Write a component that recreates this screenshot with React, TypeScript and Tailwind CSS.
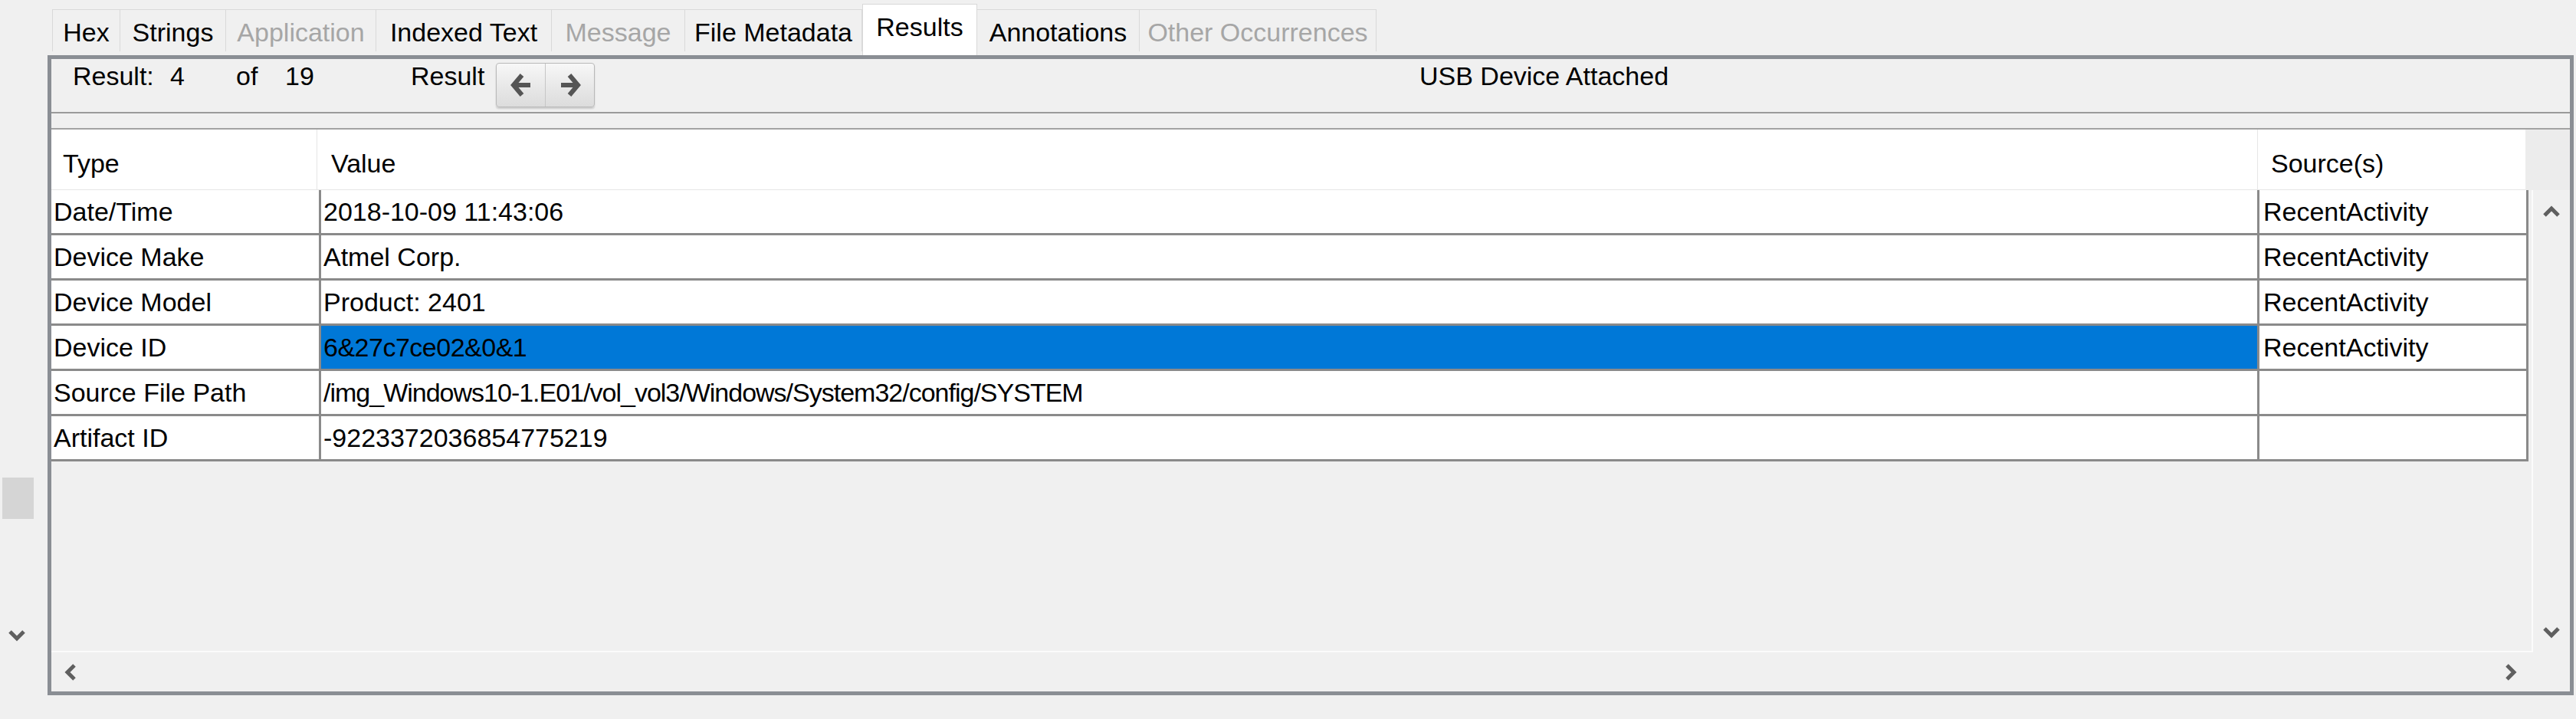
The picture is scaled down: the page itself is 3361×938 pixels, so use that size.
import React from 'react'

const tabs = [
  { label: 'Hex', w: 'w-[89px]', disabled: false },
  { label: 'Strings', w: 'w-[138px]', disabled: false },
  { label: 'Application', w: 'w-[196px]', disabled: true },
  { label: 'Indexed Text', w: 'w-[229px]', disabled: false },
  { label: 'Message', w: 'w-[174px]', disabled: true },
  { label: 'File Metadata', w: 'w-[231px]', disabled: false },
  { label: 'Results', w: 'w-[150px]', disabled: false, selected: true },
  { label: 'Annotations', w: 'w-[212px]', disabled: false },
  { label: 'Other Occurrences', w: 'w-[309px]', disabled: true },
]

// tight: Tahoma is narrower than Liberation Sans for some glyphs
const rows = [
  { type: 'Date/Time', value: '2018-10-09 11:43:06', source: 'RecentActivity', tight: '' },
  { type: 'Device Make', value: 'Atmel Corp.', source: 'RecentActivity', tight: '' },
  { type: 'Device Model', value: 'Product: 2401', source: 'RecentActivity', tight: '' },
  { type: 'Device ID', value: '6&27c7ce02&0&1', source: 'RecentActivity', tight: 'tracking-[-0.5px]' },
  {
    type: 'Source File Path',
    value: '/img_Windows10-1.E01/vol_vol3/Windows/System32/config/SYSTEM',
    source: '',
    tight: 'tracking-[-1px]',
  },
  { type: 'Artifact ID', value: '-9223372036854775219', source: '', tight: '' },
]

function Chevron({ dir }: { dir: 'up' | 'down' | 'left' | 'right' }) {
  if (dir === 'up' || dir === 'down') {
    return (
      <svg width="24" height="16" viewBox="0 0 24 16">
        <polyline
          points={dir === 'up' ? '3,13 12,4 21,13' : '3,3 12,12 21,3'}
          fill="none"
          stroke="#5f5f5f"
          strokeWidth="5"
        />
      </svg>
    )
  }
  return (
    <svg width="16" height="24" viewBox="0 0 16 24">
      <polyline
        points={dir === 'left' ? '13,3 4,12 13,21' : '3,3 12,12 3,21'}
        fill="none"
        stroke="#5f5f5f"
        strokeWidth="5"
      />
    </svg>
  )
}

function Arrow({ dir }: { dir: 'left' | 'right' }) {
  return (
    <svg width="30" height="38" viewBox="0 0 30 38">
      {dir === 'left' ? (
        <>
          <polyline points="16,6 5,19 16,32" fill="none" stroke="#555" strokeWidth="6" />
          <line x1="7" y1="19" x2="27" y2="19" stroke="#555" strokeWidth="6" />
        </>
      ) : (
        <>
          <polyline points="14,6 25,19 14,32" fill="none" stroke="#555" strokeWidth="6" />
          <line x1="3" y1="19" x2="23" y2="19" stroke="#555" strokeWidth="6" />
        </>
      )}
    </svg>
  )
}

export default function App() {
  return (
    <div
      className="w-[3361px] h-[938px] bg-[#f0f0f0] flex text-[34px] leading-[34px] text-black overflow-hidden"
      style={{ fontFamily: '"Liberation Sans", Arial, sans-serif' }}
    >
      {/* left gutter */}
      <div className="w-[62px] shrink-0 flex flex-col">
        <div className="mt-[623px] ml-[3px] w-[41px] h-[54px] bg-[#d5d5d5]" />
        <div className="mt-[144px] ml-[10px]">
          <Chevron dir="down" />
        </div>
      </div>

      <div className="flex-1 flex flex-col">
        {/* tabs */}
        <div className="h-[72px] flex items-start pl-[6px]">
          {tabs.map((t, i) => (
            <div
              key={t.label}
              className={`${t.w} flex justify-center pt-[12px] whitespace-nowrap border-t border-r border-[#d9d9d9] ${
                i === 0 ? 'border-l' : ''
              } ${t.selected ? 'mt-[5px] h-[67px] bg-white border-l' : 'mt-[12px] h-[55px]'} ${
                t.disabled ? 'text-[#a6a6a6]' : 'text-black'
              }`}
            >
              {t.label}
            </div>
          ))}
        </div>

        {/* panel */}
        <div className="w-[3296px] h-[835px] border-[5px] border-[#8a8e94] flex flex-col">
          {/* result header */}
          <div className="h-[69px] flex items-start pt-[5px] pl-[28px] whitespace-nowrap">
            <span className="w-[127px]">Result:</span>
            <span className="w-[86px]">4</span>
            <span className="w-[64px]">of</span>
            <span className="w-[164px]">19</span>
            <span className="w-[111px]">Result</span>
            <div className="w-[129px] h-[58px] flex rounded-[4px] border border-[#b9b9b9] bg-gradient-to-b from-[#f7f7f7] to-[#dcdcdc] shadow-[0_2px_2px_rgba(0,0,0,0.15)]">
              <div className="w-[64px] flex items-center justify-center border-r border-[#c6c6c6]">
                <Arrow dir="left" />
              </div>
              <div className="flex-1 flex items-center justify-center">
                <Arrow dir="right" />
              </div>
            </div>
            <span className="ml-[1076px]">USB Device Attached</span>
          </div>
          <div className="h-[2px] bg-[#9a9a9a]" />
          <div className="h-[19px]" />
          <div className="h-[2px] bg-[#a3a3a3]" />

          {/* table pane */}
          <div className="flex-1 flex flex-col">
            {/* header */}
            <div className="h-[79px] flex">
              <div className="w-[347px] bg-white border-r border-b border-[#e6e6e6] pl-[15px] pt-[27px]">Type</div>
              <div className="w-[2532px] bg-white border-r border-b border-[#e6e6e6] pl-[18px] pt-[27px]">Value</div>
              <div className="w-[349px] bg-white border-b border-[#e6e6e6] pl-[17px] pt-[27px]">Source(s)</div>
              <div className="flex-1 bg-[#ececec]" />
            </div>

            {/* body + vertical scroll */}
            <div className="flex-1 flex">
              <div className="w-[3238px] border-r-2 border-b-2 border-[#fbfbfb] flex flex-col">
                {rows.map((r, i) => (
                  <div key={r.type} className="h-[59px] flex">
                    <div className="w-[352px] h-full bg-white border-r-[3px] border-b-[3px] border-[#8a8a8a] pl-[3px] flex items-center whitespace-nowrap">
                      {r.type}
                    </div>
                    <div
                      className={`w-[2529px] h-full border-r-[3px] border-b-[3px] border-[#8a8a8a] pl-[3px] flex items-center whitespace-nowrap ${
                        r.tight
                      } ${i === 3 ? 'bg-[#0078d7]' : 'bg-white'}`}
                    >
                      {r.value}
                    </div>
                    <div className="w-[351px] h-full bg-white border-r-[3px] border-b-[3px] border-[#8a8a8a] pl-[5px] flex items-center whitespace-nowrap">
                      {r.source}
                    </div>
                  </div>
                ))}
              </div>
              <div className="flex-1 flex flex-col items-center justify-between pt-[20px] pb-[18px]">
                <Chevron dir="up" />
                <Chevron dir="down" />
              </div>
            </div>

            {/* horizontal scroll */}
            <div className="h-[51px] flex">
              <div className="w-[3238px] flex items-center justify-between pl-[17px] pr-[21px]">
                <Chevron dir="left" />
                <Chevron dir="right" />
              </div>
              <div className="flex-1" />
            </div>
          </div>
        </div>
      </div>
    </div>
  )
}
